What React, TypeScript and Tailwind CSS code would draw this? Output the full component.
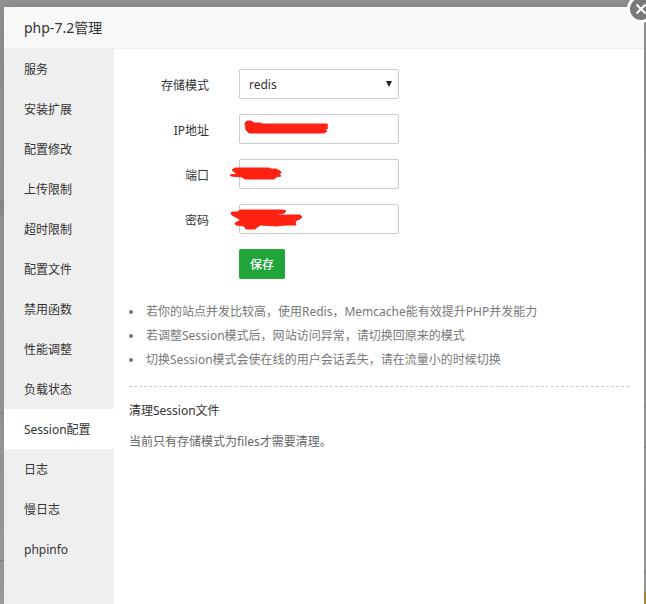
import { useState } from "react";

// ─── Data ─────────────────────────────────────────────────────────────────────

const menuItems = [
  "服务",
  "安装扩展",
  "配置修改",
  "上传限制",
  "超时限制",
  "配置文件",
  "禁用函数",
  "性能调整",
  "负载状态",
  "Session配置",
  "日志",
  "慢日志",
  "phpinfo",
];

const tips = [
  "若你的站点并发比较高，使用Redis，Memcache能有效提升PHP并发能力",
  "若调整Session模式后，网站访问异常，请切换回原来的模式",
  "切换Session模式会使在线的用户会话丢失，请在流量小的时候切换",
];

// Marker strokes hiding the private values, drawn from 10px left of the input
const fields = [
  {
    id: "ip",
    label: "IP地址",
    mark: "M16 9 L18 7 L22 7 L25 9 L31 9 L34 10 L98 10 L99 12 L96 13 L99 14 L95 16 L98 17 L95 19 L20 19 L17 16 Z",
  },
  {
    id: "port",
    label: "端口",
    mark: "M3 11 L6 9 L40 9 L42 10 L47 10 L51 12 L52 14 L50 15 L52 17 L47 18 L45 20 L16 20 L13 18 L2 17 L1 16 L8 15 Z",
  },
  {
    id: "password",
    label: "密码",
    mark: "M3 8 L9 8 L11 6 L54 6 L57 7 L55 9 L48 10 L49 11 L71 11 L73 13 L71 15 L68 16 L66 18 L67 21 L56 21 L48 22 L31 21 L26 25 L17 25 L15 22 L7 21 L6 19 L12 16 L3 11 L2 9 Z",
  },
];

const controlClass =
  "block h-[30px] w-40 rounded-xs border border-[#ccc] bg-white px-[9px] pt-0.5 text-xs text-[#333] outline-none";

const labelClass = "w-20 pt-1 text-right";

// ─── Component ────────────────────────────────────────────────────────────────

export default function App() {
  const [active, setActive] = useState("Session配置");

  return (
    <div className="grid min-h-screen overflow-hidden bg-linear-to-b from-[#949494] to-[#a0a09d] font-['Noto_Sans','Noto_Sans_CJK_SC',sans-serif] text-xs text-[#333]">
      {/* Dimmed page behind the dialog */}
      <div className="col-start-1 row-start-1 flex justify-between" aria-hidden="true">
        <div className="w-1">
          <div className="h-[61px] border-b border-[#8a8a8a]" />
          <div className="h-[21px] border-b border-[#8a8a8a]" />
          <div className="h-[120px] border-b border-[#858585]" />
          <div className="h-[14px] bg-[#8f8f8f]" />
          <div className="h-[198px] border-b border-[#8a8a8a]" />
          <div className="h-[147px] border-b border-[#8a8a9a]" />
        </div>
        <div className="flex w-0.5 flex-col">
          <div className="h-[61px] border-b border-[#858585]" />
          <div className="h-[346px] border-b border-[#858585]" />
          <div className="h-[41px] border-b border-[#858585]" />
          <div className="h-[125px] border-b border-[#858585]" />
          <div className="h-[19px]" />
          <div className="grow bg-[#b08745]" />
        </div>
      </div>

      {/* Dialog */}
      <div
        role="dialog"
        aria-labelledby="dialog-title"
        className="relative col-start-1 row-start-1 mt-[7px] mr-0.5 ml-1 flex flex-col bg-white shadow-[0_0_20px_rgba(0,0,0,0.15)]"
      >
        <header className="flex h-[42px] items-center border-b border-[#eee] bg-[#f8f8f8] px-5">
          <h1 id="dialog-title" className="text-sm">
            php-7.2管理
          </h1>
        </header>

        <button
          type="button"
          aria-label="关闭"
          className="absolute -top-3 -right-[11px] flex size-7 items-center justify-center rounded-full border-3 border-white bg-[#787878] text-white"
        >
          <svg viewBox="0 0 12 12" className="size-3" fill="none" stroke="currentColor" strokeWidth="2">
            <path d="M1.5 1.5 L10.5 10.5 M10.5 1.5 L1.5 10.5" />
          </svg>
        </button>

        <div className="flex grow">
          <nav className="w-[110px] shrink-0 bg-[#efefef]">
            {menuItems.map((item) => (
              <button
                key={item}
                type="button"
                onClick={() => setActive(item)}
                className={`block h-10 w-full px-5 pt-0.5 text-left ${
                  item === active ? "bg-white" : ""
                }`}
              >
                {item}
              </button>
            ))}
          </nav>

          <main className="min-w-0 grow px-[15px] pt-5">
            <form
              onSubmit={(e) => e.preventDefault()}
              className="flex flex-col gap-[15px]"
            >
              <div className="flex items-center gap-[30px]">
                <label htmlFor="mode" className={labelClass}>
                  存储模式
                </label>
                <div className="relative">
                  <select
                    id="mode"
                    defaultValue="redis"
                    className={`${controlClass} appearance-none`}
                  >
                    <option value="files">files</option>
                    <option value="redis">redis</option>
                    <option value="memcache">memcache</option>
                  </select>
                  <svg
                    viewBox="0 0 6 6"
                    className="pointer-events-none absolute top-3 right-[7px] size-1.5"
                    fill="#222"
                  >
                    <path d="M0 0 H6 L3 6 Z" />
                  </svg>
                </div>
              </div>

              {fields.map((field) => (
                <div key={field.id} className="flex items-center gap-[30px]">
                  <label htmlFor={field.id} className={labelClass}>
                    {field.label}
                  </label>
                  <div className="relative">
                    <input id={field.id} type="text" className={controlClass} />
                    <svg
                      viewBox="0 0 110 30"
                      className="pointer-events-none absolute top-0 -left-2.5 h-[30px] w-[110px]"
                      fill="#ff2112"
                      stroke="#ff2112"
                      strokeLinejoin="round"
                      aria-hidden="true"
                    >
                      <path d={field.mark} />
                    </svg>
                  </div>
                </div>
              ))}

              <button
                type="submit"
                className="ml-[110px] h-[30px] self-start rounded-xs bg-[#20a53a] px-[11px] pt-0.5 font-medium text-white"
              >
                保存
              </button>
            </form>

            <ul className="mt-[21px] list-disc pl-[15px] leading-6 text-[#777]">
              {tips.map((tip) => (
                <li key={tip} className="pl-0.5">
                  {tip}
                </li>
              ))}
            </ul>

            <section className="mt-3.5 border-t border-dashed border-[#ccc] pt-4">
              <h2>清理Session文件</h2>
              <p className="mt-[15px] text-[#666]">当前只有存储模式为files才需要清理。</p>
            </section>
          </main>
        </div>
      </div>
    </div>
  );
}
